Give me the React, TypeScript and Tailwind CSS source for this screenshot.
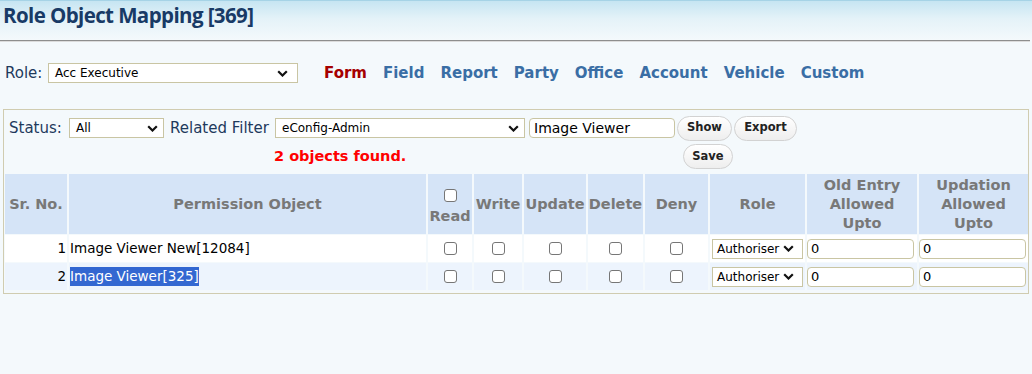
import React from "react";

const Chevron = ({ className = "" }: { className?: string }) => (
  <svg width="11" height="7" viewBox="0 0 11 7" className={className}>
    <path d="M1.2 1.2 5.5 5.5 9.8 1.2" fill="none" stroke="#111" strokeWidth="2.2" />
  </svg>
);

const Box = () => (
  <span className="inline-block w-[13px] h-[13px] rounded-[3px] border border-[#767676] bg-white" />
);

const tabs = ["Field", "Report", "Party", "Office", "Account", "Vehicle", "Custom"];

const cols = "grid grid-cols-[62px_357px_44px_48px_62px_55px_63px_95px_110px_109px] gap-x-[2px]";

const rows = [
  { no: 1, name: "Image Viewer New[12084]", bg: "bg-white", sel: false },
  { no: 2, name: "Image Viewer[325]", bg: "bg-[#edf4fd]", sel: true },
];

export default function App() {
  return (
    <div className="w-[1032px] h-[374px] overflow-hidden bg-[#f4f9fc] font-['DejaVu_Sans',sans-serif] text-[13px] text-black">
      {/* Header */}
      <div className="h-[40px] border-t border-[#a6d3e6] bg-gradient-to-b from-[#c6e5f2] via-[#e4f2f8] via-45% to-[#f4f9fc] px-[3px]">
        <h1 className="font-['Open_Sans',sans-serif] font-bold text-[20.5px] leading-[26px] pt-[1px] text-[#183a66] tracking-[-0.6px]">
          Role Object Mapping [369]
        </h1>
      </div>
      <div className="w-[1030px] border-t border-[#8e8e8e] border-b border-b-[#dcdcdc]" />

      {/* Role + tabs */}
      <div className="flex items-center h-[20px] mt-[21px] pl-[5px]">
        <span className="text-[15px] text-[#1e3a5c] w-[43px]">Role:</span>
        <div className="flex items-center justify-between w-[250px] h-[20px] bg-white border border-[#c9c5a3] pl-[6px] pr-[9px] text-[12px]">
          <span>Acc Executive</span>
          <Chevron />
        </div>
        <div className="flex items-center gap-[16px] ml-[26px] font-bold text-[15px] text-[#3a6ea5]">
          <span className="text-[#a50000]">Form</span>
          {tabs.map((t) => (
            <span key={t}>{t}</span>
          ))}
        </div>
      </div>

      {/* Panel */}
      <div className="mt-[26px] mx-[3px] h-[185px] border border-[#d0ccb0] pt-[5px]">
        <div className="flex items-center h-[26px] pl-[5px]">
          <span className="text-[15px] text-[#1e3a5c] w-[60px]">Status:</span>
          <div className="flex items-center justify-between w-[95px] h-[20px] bg-white border border-[#c9c5a3] pl-[6px] pr-[5px] text-[12px]">
            <span>All</span>
            <Chevron />
          </div>
          <span className="text-[15px] text-[#1e3a5c] ml-[6px] w-[105px]">Related Filter</span>
          <div className="flex items-center justify-between w-[250px] h-[20px] bg-white border border-[#c9c5a3] pl-[6px] pr-[5px] text-[12px]">
            <span>eConfig-Admin</span>
            <Chevron />
          </div>
          <div className="ml-[4px] w-[146px] h-[20px] bg-white border border-[#c9c5a3] rounded-[4px] pl-[4px] text-[14px] leading-[18px]">
            Image Viewer
          </div>
          <button className="ml-[2px] w-[55px] h-[25px] rounded-full border border-[#d2d2d2] bg-gradient-to-b from-white to-[#eeeeee] text-[11.5px] font-bold text-[#222]">
            Show
          </button>
          <button className="ml-[2px] w-[63px] h-[25px] rounded-full border border-[#d2d2d2] bg-gradient-to-b from-white to-[#eeeeee] text-[11.5px] font-bold text-[#222]">
            Export
          </button>
        </div>
        <div className="flex items-center h-[25px] mt-[3px]">
          <span className="ml-[270px] w-[409px] font-bold text-[14.5px] text-[#ff0000]">2 objects found.</span>
          <button className="w-[50px] h-[25px] rounded-full border border-[#d2d2d2] bg-gradient-to-b from-white to-[#eeeeee] text-[11.5px] font-bold text-[#222]">
            Save
          </button>
        </div>

        {/* Table */}
        <div className="ml-[1px] mt-[5px] flex flex-col gap-y-[1px]">
          <div className={`${cols} h-[60px] font-bold text-[14.5px] leading-[19px] text-[#787878]`}>
            <div className="bg-[#d5e4f7] flex items-center justify-center">Sr. No.</div>
            <div className="bg-[#d5e4f7] flex items-center justify-center">Permission Object</div>
            <div className="bg-[#d5e4f7] flex flex-col items-center justify-center pt-[6px]">
              <Box />
              <span className="mt-[5px]">Read</span>
            </div>
            <div className="bg-[#d5e4f7] flex items-center justify-center">Write</div>
            <div className="bg-[#d5e4f7] flex items-center justify-center">Update</div>
            <div className="bg-[#d5e4f7] flex items-center justify-center">Delete</div>
            <div className="bg-[#d5e4f7] flex items-center justify-center">Deny</div>
            <div className="bg-[#d5e4f7] flex items-center justify-center">Role</div>
            <div className="bg-[#d5e4f7] flex items-center justify-center text-center">
              Old Entry
              <br />
              Allowed
              <br />
              Upto
            </div>
            <div className="bg-[#d5e4f7] flex items-center justify-center text-center">
              Updation
              <br />
              Allowed
              <br />
              Upto
            </div>
          </div>
          {rows.map((r) => (
            <div key={r.no} className={`${cols} h-[27px] text-[13.5px]`}>
              <div className={`${r.bg} flex items-center justify-end pr-[1px]`}>{r.no}</div>
              <div className={`${r.bg} flex items-center pl-[1px]`}>
                <span className={r.sel ? "bg-[#3367d1] text-white leading-[19px]" : ""}>{r.name}</span>
              </div>
              {[0, 1, 2, 3, 4].map((i) => (
                <div key={i} className={`${r.bg} flex items-center justify-center`}>
                  <Box />
                </div>
              ))}
              <div className={`${r.bg} flex items-center justify-center`}>
                <div className="flex items-center gap-[4px] w-[91px] h-[20px] bg-white border border-[#c9c5a3] pl-[4px] text-[12px]">
                  <span>Authoriser</span>
                  <Chevron />
                </div>
              </div>
              <div className={`${r.bg} flex items-center`}>
                <div className="w-[107px] h-[20px] bg-white border border-[#c9c5a3] rounded-[4px] pl-[3px] text-[13px] leading-[18px]">
                  0
                </div>
              </div>
              <div className={`${r.bg} flex items-center`}>
                <div className="w-[107px] h-[20px] bg-white border border-[#c9c5a3] rounded-[4px] pl-[3px] text-[13px] leading-[18px]">
                  0
                </div>
              </div>
            </div>
          ))}
        </div>
      </div>
    </div>
  );
}
